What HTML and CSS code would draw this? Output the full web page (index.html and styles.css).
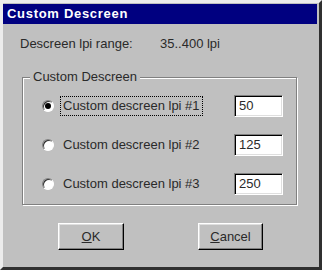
FILE: index.html
```html
<!DOCTYPE html>
<html lang="en">
<head>
  <meta charset="UTF-8">
  <title>Custom Descreen</title>
  <link rel="stylesheet" href="styles.css">
</head>
<body>
  <div class="dialog">
    <div class="titlebar">Custom Descreen</div>

    <div class="range">
      <span class="range-label">Descreen lpi range:</span>
      <span class="range-value">35..400 lpi</span>
    </div>

    <fieldset class="group">
      <legend>Custom Descreen</legend>
      <div class="row">
        <span class="radio checked"></span>
        <span class="label focused">Custom descreen lpi #1</span>
        <span class="field">50</span>
      </div>
      <div class="row">
        <span class="radio"></span>
        <span class="label">Custom descreen lpi #2</span>
        <span class="field">125</span>
      </div>
      <div class="row">
        <span class="radio"></span>
        <span class="label">Custom descreen lpi #3</span>
        <span class="field">250</span>
      </div>
    </fieldset>

    <div class="buttons">
      <button class="btn btn-ok"><u>O</u>K</button>
      <button class="btn btn-cancel"><u>C</u>ancel</button>
    </div>
  </div>
</body>
</html>
```

FILE: styles.css
```css
:root {
  --face: #c0c0c0;
  --shadow: #808080;
  --dark: #303030;
  --light: #dfdfdf;
  --navy: #000080;
  --text: #2a2a2a;
}

* {
  box-sizing: border-box;
}

body {
  margin: 0;
  background: var(--face);
  font-family: "Liberation Sans", Arial, sans-serif;
  font-size: 13px;
  color: var(--text);
}

.dialog {
  width: 322px;
  height: 270px;
  background: var(--face);
  border: 3px solid;
  border-color: #ececec var(--dark) var(--dark) #ececec;
}

.titlebar {
  margin: 1px 2px 0 0;
  height: 20px;
  padding-left: 4px;
  background: var(--navy);
  color: #fff;
  font-weight: bold;
  line-height: 20px;
  letter-spacing: 0.7px;
}

.range {
  display: flex;
  margin-top: 12px;
  padding-left: 17px;
  line-height: 16px;
}

.range-label {
  width: 140px;
}

.group {
  width: 275px;
  margin: 17px 0 0 19px;
  padding: 10px 13px 9px 0;
  border: 1px solid var(--shadow);
  box-shadow: inset 1px 1px 0 #fff, 1px 1px 0 #fff;
}

.group legend {
  margin-left: 7px;
  padding: 0 3px;
  line-height: 16px;
  background: var(--face);
}

.row {
  display: flex;
  align-items: center;
  height: 22px;
  padding-left: 19px;
}

.row + .row {
  margin-top: 17px;
}

.radio {
  position: relative;
  width: 12px;
  height: 12px;
  border-radius: 50%;
  border: 1px solid;
  border-color: var(--shadow) #fff #fff var(--shadow);
  background: #fff;
  box-shadow: inset 1px 1px 0 var(--dark);
}

.radio.checked::after {
  content: "";
  position: absolute;
  left: 2px;
  top: 2px;
  width: 6px;
  height: 6px;
  border-radius: 50%;
  background: #000;
}

.label {
  margin-left: 7px;
  padding: 1px 2px;
  line-height: 16px;
}

.label.focused {
  outline: 1px dotted #000;
}

.field {
  margin-left: auto;
  width: 49px;
  height: 22px;
  padding-left: 4px;
  line-height: 20px;
  background: #fff;
  border: 1px solid;
  border-color: var(--shadow) #fff #fff var(--shadow);
  box-shadow: inset 1px 1px 0 #000, inset -1px -1px 0 var(--light);
}

.buttons {
  display: flex;
  gap: 74px;
  margin-top: 18px;
  padding-left: 55px;
}

.btn {
  width: 66px;
  height: 27px;
  padding: 0;
  background: var(--face);
  border: 1px solid;
  border-color: #fff #000 #000 #fff;
  box-shadow: inset -1px -1px 0 var(--shadow), inset 1px 1px 0 var(--light);
  font-family: inherit;
  font-size: 13px;
  color: var(--text);
}

.btn-cancel {
  width: 65px;
}
```
